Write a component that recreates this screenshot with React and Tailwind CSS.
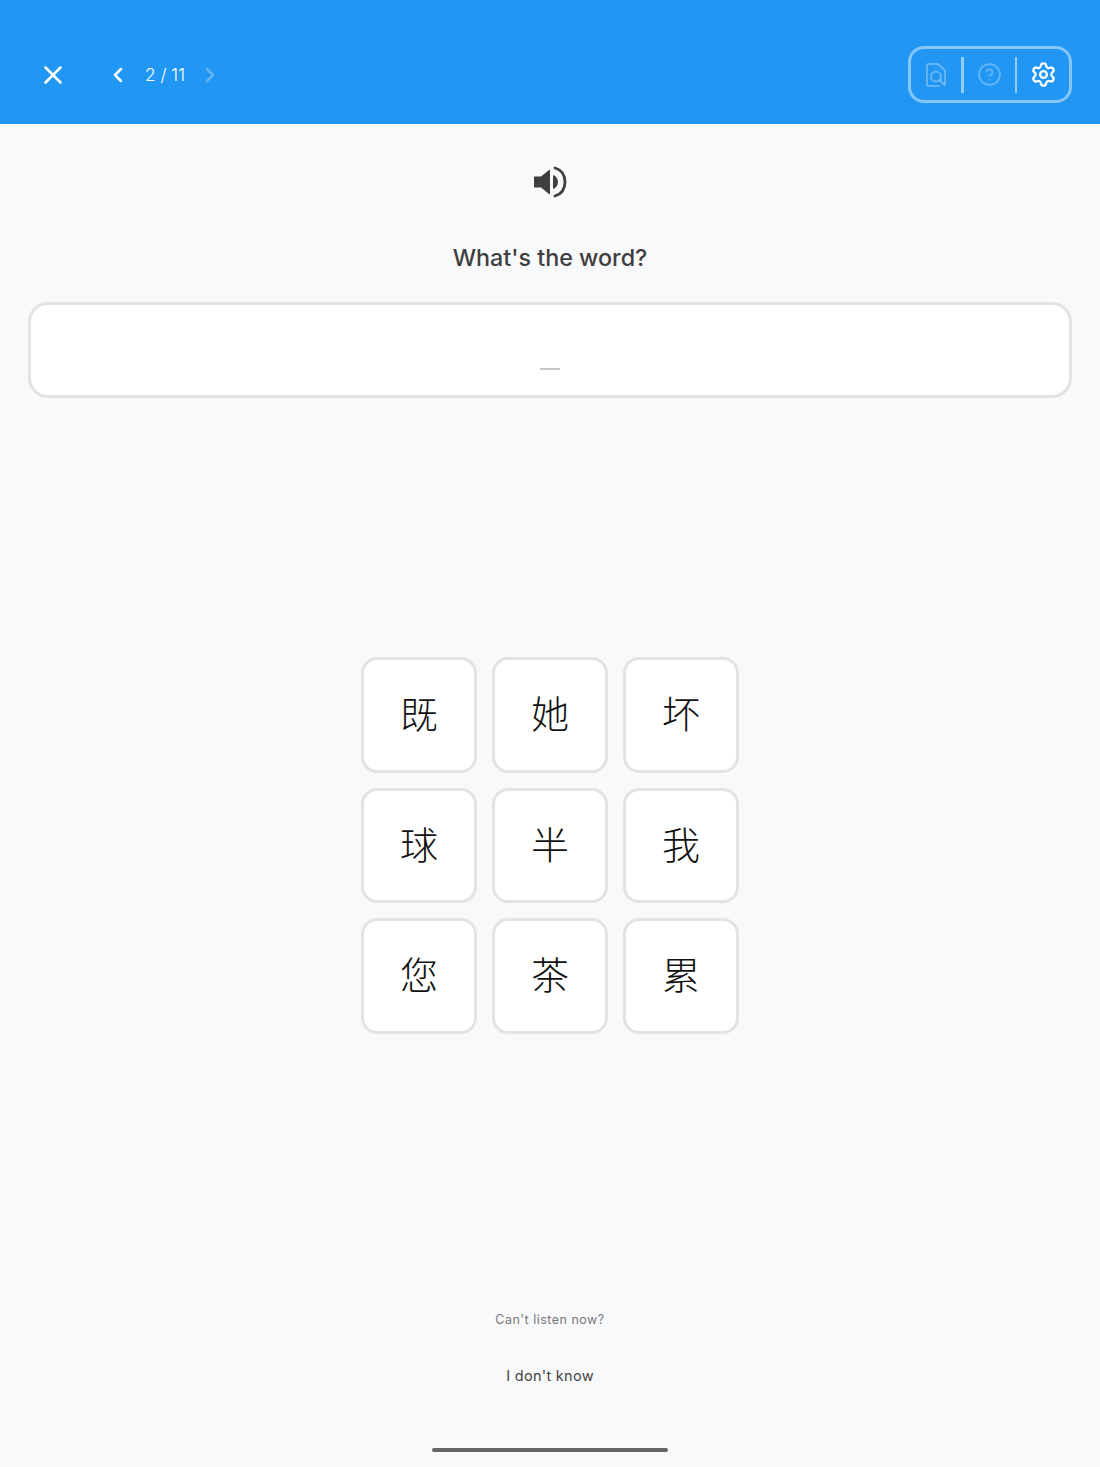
import React from "react";
import { X, ChevronLeft, ChevronRight, CircleHelp, Settings } from "lucide-react";

const chars = ["既", "她", "坏", "球", "半", "我", "您", "茶", "累"];

function FindPage() {
  return (
    <svg width="22" height="24" viewBox="0 0 22 24" fill="none" stroke="currentColor" strokeWidth="2" strokeLinecap="round" strokeLinejoin="round">
      <path d="M14 23H3.500A1.500 1.500 0 0 1 2 21.500V2.500A1.500 1.500 0 0 1 3.500 1H13l7 6.500V21" />
      <circle cx="11" cy="13.500" r="5" />
      <path d="M14.800 17.300L19.500 22" />
    </svg>
  );
}

function Speaker() {
  return (
    <svg width="36" height="34" viewBox="0 0 36 34" fill="none">
      <path d="M2 11.500h7L17 5c.6-.4 1-.2 1 .6v22.800c0 .8-.4 1-1 .6L9 22.500H2z" fill="#3f3f3f" />
      <path d="M21 10c3.200 1 5 3.800 5 7s-1.800 6-5 7z" fill="#3f3f3f" />
      <path d="M23 3C29.500 5 33 10.500 33 17s-3.500 12-10 14" stroke="#3f3f3f" strokeWidth="2.800" strokeLinecap="round" />
    </svg>
  );
}

export default function App() {
  return (
    <div className="flex h-[1467px] w-[1100px] flex-col items-center bg-[#f8f9fb] font-['Inter',sans-serif]">
      <header className="flex h-[124px] w-full shrink-0 items-center bg-[#2196f3] pt-[26px] pr-[28px] pl-[38px] text-white">
        <X size={30} strokeWidth={2} />
        <div className="ml-[38px] flex items-center">
          <ChevronLeft size={24} strokeWidth={2.5} />
          <span className="ml-[15px] w-[40px] text-center text-[17.300px] font-light whitespace-nowrap">2 / 11</span>
          <ChevronRight size={24} strokeWidth={2.500} className="ml-[13px] opacity-30" />
        </div>
        <div className="-mt-[1px] ml-auto flex h-[57px] w-[164px] items-center rounded-[16px] border-[3px] border-white/45">
          <div className="flex w-[51px] justify-center text-white/30"><FindPage /></div>
          <div className="h-[36px] w-[2.500px] bg-white/50" />
          <div className="flex w-[52.500px] justify-center text-white/30"><CircleHelp size={25} strokeWidth={1.800} /></div>
          <div className="h-[36px] w-[2.500px] bg-white/50" />
          <div className="flex w-[52.500px] justify-center"><Settings size={27} strokeWidth={2} /></div>
        </div>
      </header>

      <div className="mt-[41px] flex h-[34px] items-center"><Speaker /></div>
      <h1 className="mt-[42px] text-center text-[23.300px] leading-[34px] font-medium text-[#3f3f3f]">What's the word?</h1>

      <div className="mt-[27px] flex h-[96px] w-[1044px] items-end justify-center rounded-[20px] border-[3px] border-[#e3e3e4] bg-white pb-[25px]">
        <div className="h-[2px] w-[20px] bg-[#c6c6c6]" />
      </div>

      <div className="mt-[259px] grid grid-cols-[repeat(3,116px)] gap-[15px]">
        {chars.map((c) => (
          <div key={c} className="flex h-[115.600px] w-[116px] items-center justify-center rounded-[16px] border-[3px] border-[#e3e3e4] bg-white pb-[5px] font-['Noto_Sans_CJK_SC',sans-serif] text-[38px] leading-none font-light text-[#111111]">
            {c}
          </div>
        ))}
      </div>

      <p className="mt-[278px] text-[12.500px] leading-4 tracking-[0.5px] text-[#777777]">Can't listen now?</p>
      <p className="mt-[38px] text-[14.500px] leading-5 tracking-[0.3px] text-[#444444]">I don't know</p>
      <div className="mt-[62px] h-[4px] w-[236px] rounded-full bg-[#666666]" />
    </div>
  );
}
